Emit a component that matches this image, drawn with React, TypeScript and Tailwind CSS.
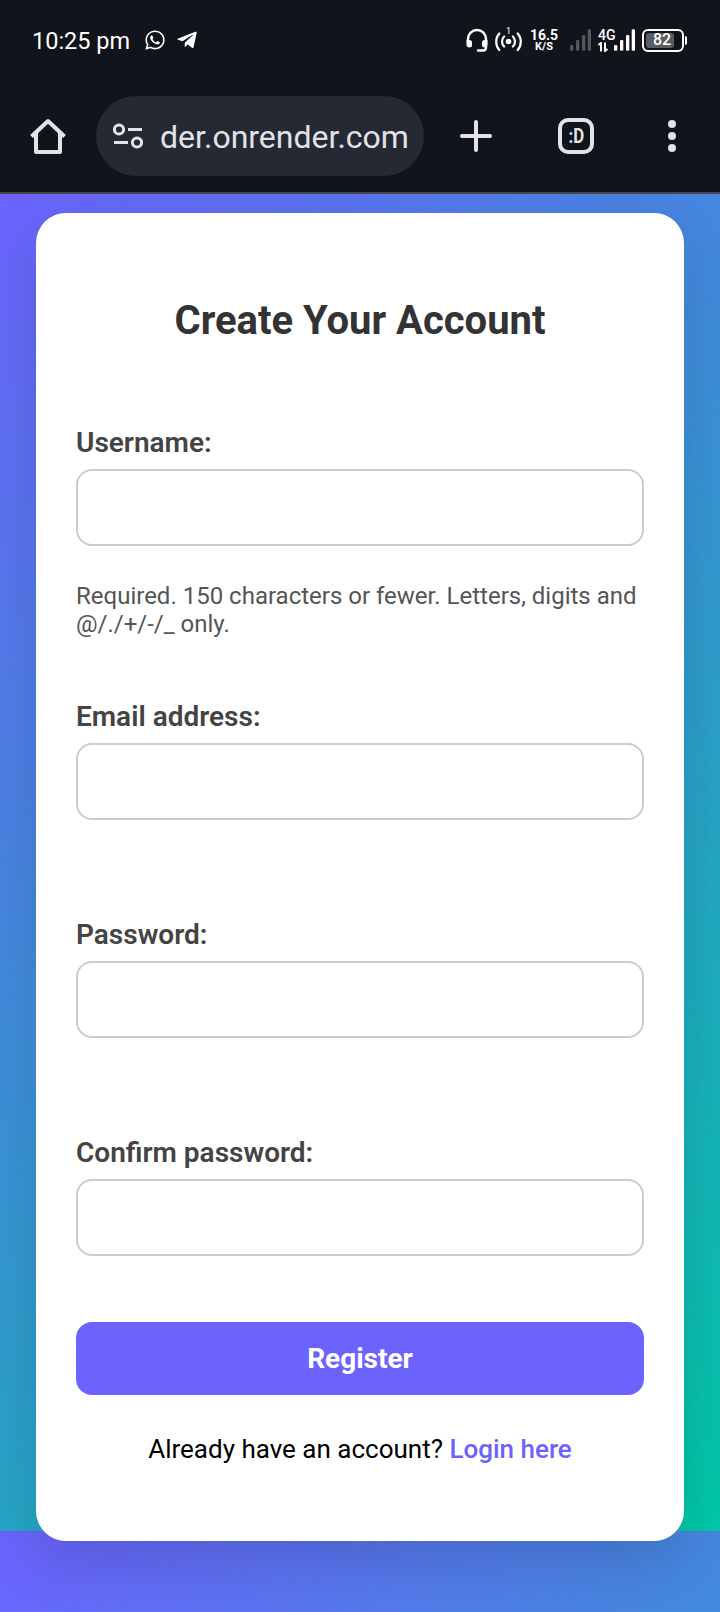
import { FaTelegramPlane, FaWhatsapp } from 'react-icons/fa';

function Headset() {
  return (
    <svg className="ml-[268px] h-6 w-[22px] shrink-0" viewBox="0 0 22 24">
      <path d="M2 14v-3a9 9 0 0 1 18 0v8.500q0 3-3 3h-5" fill="none" stroke="#fff" strokeWidth="2.400" strokeLinecap="round" />
      <path d="M1 12h2.500q2.500 0 2.500 2.500v2.500q0 2.500-2.500 2.500q-3 0-3-3V12zM21 12h-2.500q-2.500 0-2.500 2.500v2.500q0 2.500 2.500 2.500q3 0 3-3V12z" fill="#fff" />
    </svg>
  );
}

function Hotspot() {
  return (
    <div className="relative ml-[7px] h-6 w-7 shrink-0">
      <svg className="h-6 w-7" viewBox="0 0 28 24" fill="none" stroke="#fff" strokeWidth="2.200" strokeLinecap="round">
        <circle cx="13.500" cy="13.500" r="2.800" fill="#fff" stroke="none" />
        <path d="M9.100 8.500a7 7 0 0 0 0 10M17.900 8.500a7 7 0 0 1 0 10M4.300 5.500a12.500 12.500 0 0 0 0 16.500M22.700 5.500a12.500 12.500 0 0 1 0 16.500" />
      </svg>
      <span className="absolute -top-px left-[11px] text-[9px] leading-[9px]">1</span>
    </div>
  );
}

function Signal({ className }: { className: string }) {
  return (
    <svg className={`h-[22px] w-[22px] shrink-0 ${className}`} viewBox="0 0 22 22" fill="currentColor">
      <rect x="0" y="16" width="3.300" height="5.700" rx="1.200" />
      <rect x="6" y="11" width="3.300" height="10.700" rx="1.200" />
      <rect x="12" y="6" width="3.300" height="15.700" rx="1.200" />
      <rect x="17.700" y="0.300" width="3.300" height="21.400" rx="1.200" />
    </svg>
  );
}

function Battery() {
  return (
    <div className="ml-[6px] flex h-[23px] shrink-0 items-center">
      <div className="relative h-[23px] w-[42px] rounded-[6px] border-2 border-white p-[2px]">
        <div className="h-full w-[28px] rounded-[3px] bg-[#5b5c62]" />
        <span className="absolute inset-y-0 left-[9px] flex items-center text-[16px] leading-none font-medium">82</span>
      </div>
      <div className="ml-[1px] h-[9px] w-[2px] rounded-r-[2px] bg-white" />
    </div>
  );
}

function StatusBar() {
  return (
    <div className="flex h-20 items-center pl-[32px] text-white">
      <span className="w-[98px] pt-[2px] text-[23.500px] leading-[28px] whitespace-nowrap">10:25 pm</span>
      <FaWhatsapp className="ml-[14px] size-[22px] shrink-0" />
      <FaTelegramPlane className="ml-[10px] size-[22px] shrink-0" />
      <Headset />
      <Hotspot />
      <div className="ml-[6px] flex w-[30px] shrink-0 flex-col items-center font-bold">
        <span className="text-[14px] leading-[13px]">16.5</span>
        <span className="text-[11px] leading-[10px]">K/S</span>
      </div>
      <Signal className="ml-[11px] text-[#54565c]" />
      <div className="ml-[6px] w-[17px] shrink-0">
        <div className="text-[14px] leading-[13px] font-medium">4G</div>
        <svg className="h-[10px] w-[11px]" viewBox="0 0 11 10" fill="none" stroke="#fff" strokeWidth="2">
          <path d="M0.500 3 3 1v8.500M7 .5V9l2.500-2" />
        </svg>
      </div>
      <Signal className="-ml-px text-white" />
      <Battery />
    </div>
  );
}

function BrowserBar() {
  return (
    <div className="flex h-28 items-center pl-[30px] text-[#e3e2e9]">
      <svg className="size-9 shrink-0" viewBox="0 0 36 36" fill="none" stroke="currentColor" strokeWidth="4">
        <path d="M1.500 18.500 18 3l16.500 15.500M6 15v19h24V15" strokeLinejoin="round" />
      </svg>
      <div className="ml-[30px] flex h-20 w-[328px] shrink-0 items-center rounded-full bg-[#252934] pl-[17px]">
        <svg className="h-[26px] w-[30px] shrink-0" viewBox="0 0 30 26" fill="none" stroke="currentColor" strokeWidth="3">
          <circle cx="6" cy="6.500" r="4.600" />
          <circle cx="24" cy="19.500" r="4.600" />
          <path d="M15 6.500h14M1 19.500h14" />
        </svg>
        <span className="ml-[17px] pt-[2px] text-[32px] leading-[40px]">der.onrender.com</span>
      </div>
      <svg className="ml-9 size-8 shrink-0" viewBox="0 0 32 32" stroke="currentColor" strokeWidth="4" strokeLinecap="round">
        <path d="M16 2v28M2 16h28" />
      </svg>
      <div className="ml-[66px] flex size-9 shrink-0 items-center justify-center rounded-[10px] border-4 border-current">
        <span className="inline-block scale-x-[0.840] text-[20px] leading-none font-bold">:D</span>
      </div>
      <svg className="ml-[74px] h-8 w-2 shrink-0" viewBox="0 0 8 32" fill="currentColor">
        <circle cx="4" cy="4" r="4" />
        <circle cx="4" cy="16" r="4" />
        <circle cx="4" cy="28" r="4" />
      </svg>
    </div>
  );
}

function Field({ id, label, type, className }: { id: string; label: string; type: string; className: string }) {
  return (
    <div className={className}>
      <label htmlFor={id} className="block text-[28px] leading-[32px] font-semibold text-[#444]">
        {label}
      </label>
      <input id={id} type={type} className="mt-[10px] block h-[77px] w-full rounded-[16px] border-2 border-[#ccc] bg-white px-5 text-[28px]" />
    </div>
  );
}

export default function App() {
  return (
    <div className="flex h-[1612px] w-[720px] flex-col overflow-hidden font-['Roboto','Liberation_Sans',sans-serif]">
      <header className="h-[194px] shrink-0 border-b-2 border-[#46474d] bg-[#11141b]">
        <StatusBar />
        <BrowserBar />
      </header>
      <main className="flex-1 bg-[linear-gradient(135deg,#6c63ff,#00c9a7)] bg-[length:100%_1337px] bg-repeat-y px-9 pt-[19px]">
        <form className="h-[1328px] rounded-[30px] bg-white px-10 pt-[84px] shadow-[0_20px_60px_rgba(0,0,0,0.15)]">
          <h1 className="text-center text-[40px] leading-[48px] font-bold text-[#333]">Create Your Account</h1>
          <Field id="username" label="Username:" type="text" className="mt-[82px]" />
          <p className="mt-[36px] text-[24px] leading-[28px] whitespace-nowrap text-[#555]">
            Required. 150 characters or fewer. Letters, digits and
            <br />
            @/./+/-/_ only.
          </p>
          <Field id="email" label="Email address:" type="email" className="mt-[63px]" />
          <Field id="password" label="Password:" type="password" className="mt-[99px]" />
          <Field id="confirm" label="Confirm password:" type="password" className="mt-[99px]" />
          <button type="button" className="mt-[66px] block h-[73px] w-full rounded-[16px] bg-[#6c63ff] text-[28px] leading-[32px] font-bold text-white">
            Register
          </button>
          <p className="mt-[38px] text-center text-[26px] leading-[32px] text-black">
            Already have an account? <a className="font-medium text-[#6c63ff]">Login here</a>
          </p>
        </form>
      </main>
    </div>
  );
}
